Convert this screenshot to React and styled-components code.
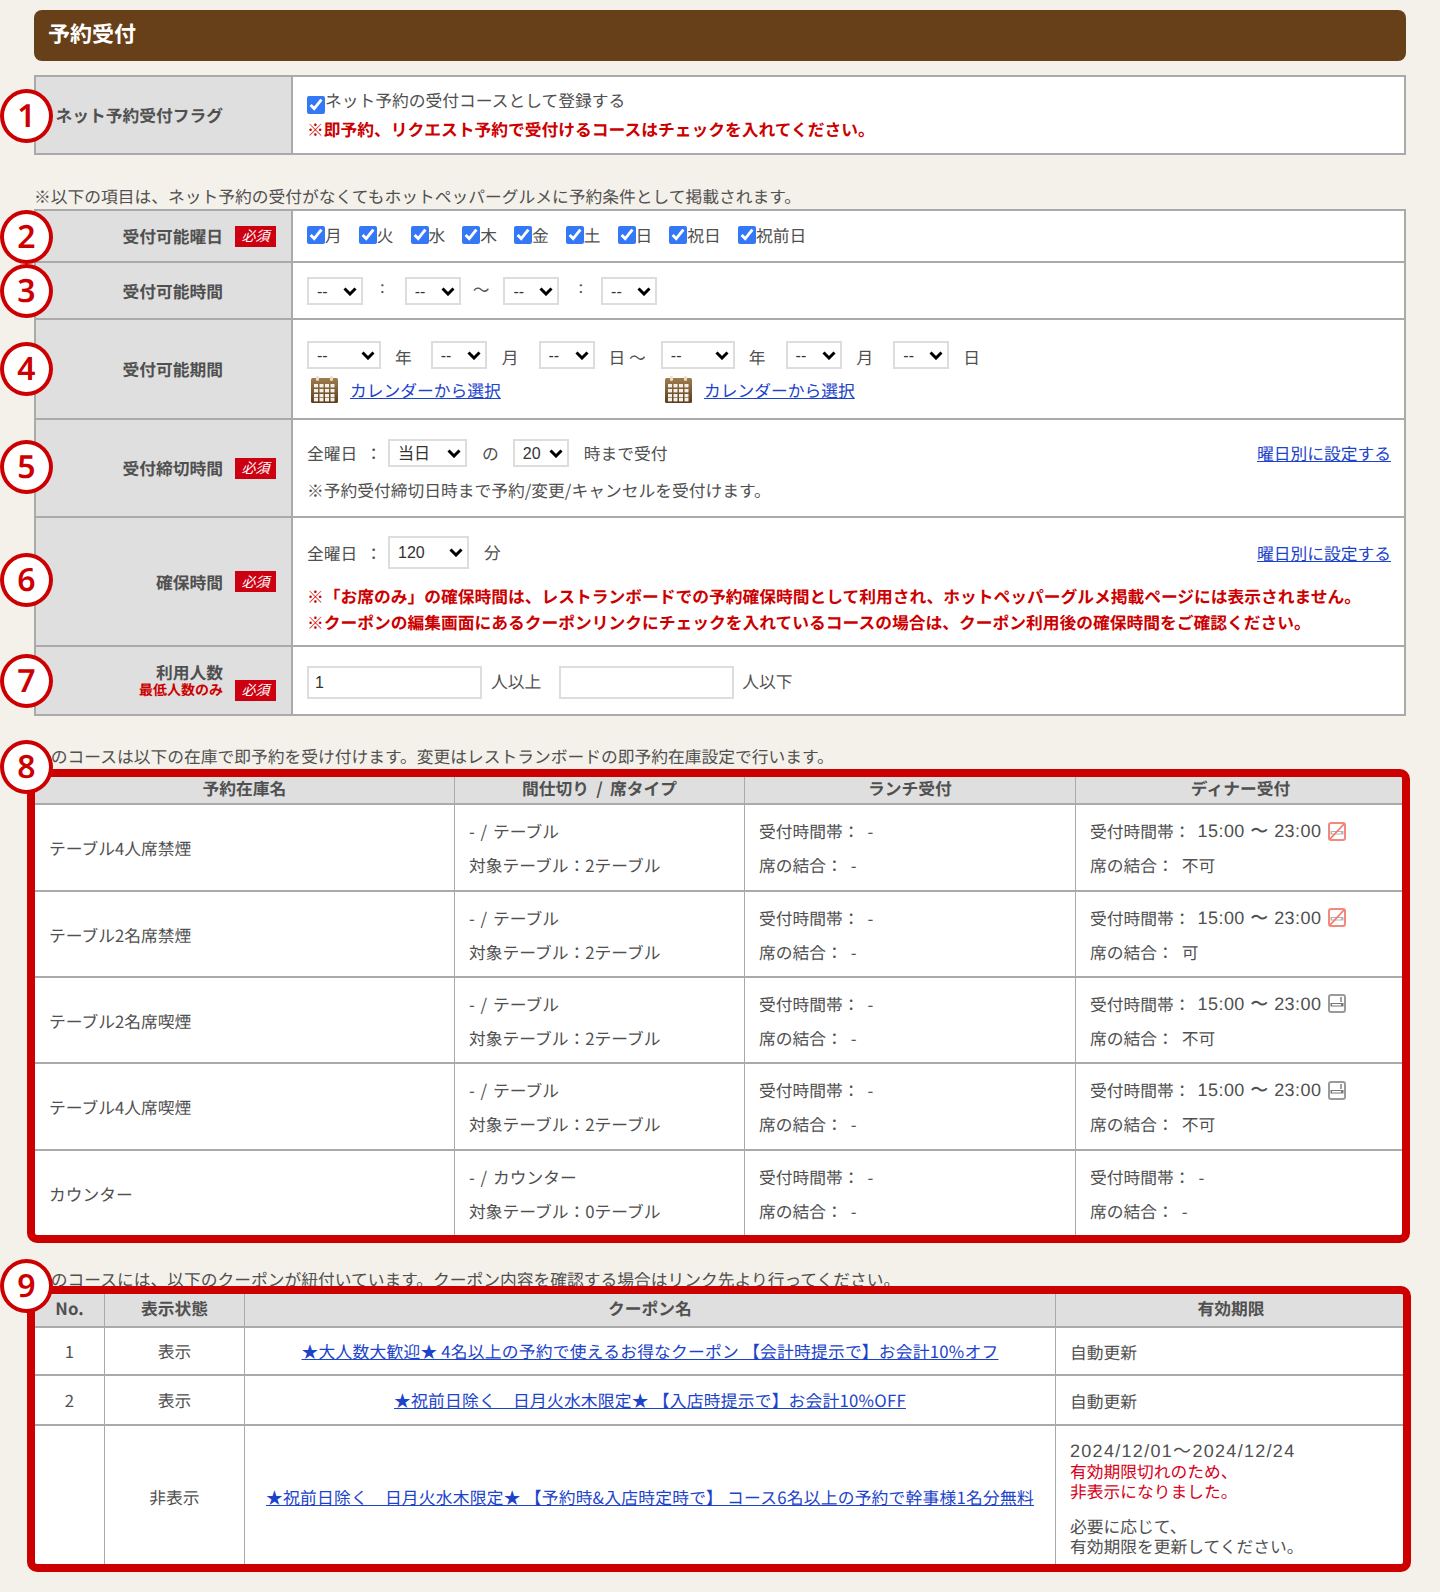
import styled, { createGlobalStyle } from "styled-components";

const Global = createGlobalStyle`
	body {
		margin: 0;
		background: #f4f1ea;
		color: #505050;
		font-family: "Noto Sans CJK JP", "Noto Sans", sans-serif;
		font-size: 16.75px;
		line-height: 20px;
		text-rendering: geometricPrecision;
	}
`;

const Page = styled.div`
	position: relative;
	width: 1372px;
	height: 1592px;
	padding: 10px 34px 0;
	overflow: hidden;
`;
const Heading = styled.h2`
	margin: 0 0 14px;
	height: 51px;
	box-sizing: border-box;
	display: flex;
	align-items: center;
	padding: 0 0 5px 14px;
	border-radius: 8px;
	background: #673f18;
	color: #fff;
	font-size: 22px;
	font-weight: 700;
`;
const Marker = styled.div`
	position: absolute;
	left: 0;
	top: ${(p) => p.$y - 27}px;
	z-index: 2;
	box-sizing: border-box;
	width: 53px;
	height: 54px;
	display: flex;
	align-items: center;
	justify-content: center;
	border: 4px solid #cc0000;
	border-radius: 50%;
	background: #fff;
	color: #cc0000;
	font-family: "Noto Sans", sans-serif;
	font-size: 32px;
	font-weight: 600;
`;
const Note = styled.p`
	margin: ${(p) => p.$mt}px 0 ${(p) => p.$mb}px;
	height: 20px;
`;

const FormTable = styled.table`
	width: 100%;
	table-layout: fixed;
	border-collapse: collapse;
	background: #fff;
	border: 2px solid #aaa;
`;
const Row = styled.tr`
	height: ${(p) => p.$h}px;
`;
const Label = styled.th`
	width: 257px;
	box-sizing: border-box;
	padding: 0 15px 0 0;
	background: #dfdfdf;
	border: 2px solid #aaa;
	font-weight: 700;
`;
const LabelWrap = styled.div`
	display: flex;
	align-items: ${(p) => (p.$end ? "flex-end" : "center")};
	justify-content: flex-end;
`;
const LabelText = styled.div`
	text-align: right;
	line-height: 18px;
`;
const SubLabel = styled.div`
	color: #cc0000;
	font-size: 14px;
`;
const BadgeSlot = styled.div`
	width: 41px;
	margin-left: 12px;
	flex: none;
`;
const Badge = styled.span`
	display: flex;
	align-items: center;
	justify-content: center;
	height: 21px;
	margin-bottom: ${(p) => (p.$low ? -2 : 0)}px;
	background: #cc0011;
	color: #fff;
	font-size: 14px;
	font-style: italic;
	font-weight: 400;
`;
const Field = styled.td`
	vertical-align: top;
	padding: ${(p) => p.$pt}px 13px 0 14px;
	border: 2px solid #aaa;
`;
const Line = styled.div`
	display: flex;
	align-items: center;
	height: ${(p) => p.$h || 28}px;
	margin-top: ${(p) => p.$mt || 0}px;
`;
const Red = styled.span`
	color: #cc0000;
	font-weight: 700;
`;
const Check = styled.input.attrs({ type: "checkbox" })`
	width: 18px;
	height: 18px;
	margin: ${(p) => p.$off || 0}px 0 0;
	flex: none;
	accent-color: #3478f6;
`;
const Day = styled.label`
	display: flex;
	align-items: center;
	margin-right: 17px;
`;
const chevron = encodeURIComponent(
	'<svg xmlns="http://www.w3.org/2000/svg" width="14" height="9" viewBox="0 0 14 9"><path d="M1.5 1.5 7 7l5.5-5.5" fill="none" stroke="#000" stroke-width="3"/></svg>'
);
const Select = styled.select`
	appearance: none;
	width: ${(p) => p.$w}px;
	height: ${(p) => p.$h || 28}px;
	padding: 0 0 0 8px;
	flex: none;
	box-sizing: border-box;
	border: 2px solid #ddd;
	border-radius: 0;
	background: #fff url("data:image/svg+xml,${chevron}") no-repeat right 4px center;
	color: #333;
	font-family: "Liberation Sans", "Noto Sans CJK JP", sans-serif;
	font-size: 16px;
`;
const Unit = styled.span`
	margin: 0 ${(p) => p.$r}px ${(p) => p.$up || 0}px ${(p) => p.$l}px;
	flex: none;
`;
const Link = styled.a`
	color: #1c43c9;
	text-decoration: underline;
`;
const CouponLink = styled(Link)`
	letter-spacing: 0.23px;
`;
const PushLink = styled(Link)`
	margin-left: auto;
`;
const CalLink = styled.div`
	display: flex;
	align-items: center;
	width: 350px;
	padding-left: 4px;
	gap: 12px;
`;
const TextBox = styled.input`
	width: 175px;
	height: 33px;
	padding: 0 6px;
	box-sizing: border-box;
	border: 2px solid #ddd;
	color: #333;
	font-family: "Liberation Sans", sans-serif;
	font-size: 16px;
`;

const Frame = styled.div`
	position: relative;
	width: ${(p) => p.$w}px;
	margin-left: -7px;
	box-sizing: border-box;
	border: 8px solid #cc0000;
	border-radius: 10px;
	overflow: hidden;
	background: #fff;
`;
const DataTable = styled.table`
	width: 100%;
	table-layout: fixed;
	border-collapse: collapse;
	tr > *:first-child {
		border-left: none;
	}
	tr > *:last-child {
		border-right: none;
	}
	thead th {
		border-top: none;
	}
	tbody tr:last-child td {
		border-bottom: none;
	}
`;
const HeadCell = styled.th`
	width: ${(p) => p.$w}px;
	padding: 0 0 4px;
	background: #dfdfdf;
	border: 1px solid #aaa;
	border-bottom-width: 2px;
	font-weight: 700;
	word-spacing: 3.5px;
`;
const Cell = styled.td`
	padding: ${(p) => (p.$center ? `${p.$pt || 0}px 0 0` : `${p.$pt || 1}px 14px 0`)};
	border: 1px solid #aaa;
	border-bottom-width: 2px;
	text-align: ${(p) => (p.$center ? "center" : "left")};
`;
const CellLine = styled.div`
	display: flex;
	align-items: center;
	height: 34px;
`;
const TypeLine = styled(CellLine)`
	word-spacing: 2px;
`;
const Gap = styled.span`
	margin-left: 8px;
`;
const Num = styled.span`
	margin-left: 7px;
	font-family: "Liberation Sans", sans-serif;
	font-size: 18px;
	letter-spacing: 0.45px;
`;
const ExpireNum = styled.div`
	font-family: "Liberation Sans", "Noto Sans CJK JP", sans-serif;
	font-size: 18px;
	letter-spacing: 1.3px;
`;
const Expired = styled.div`
	color: #d9001b;
`;
const Spacer = styled.div`
	height: 15px;
`;

function CalendarIcon() {
	return (
		<svg width="27" height="27" viewBox="0 0 27 27">
			<defs>
				<linearGradient id="cal" x1="0" y1="0" x2="0" y2="1">
					<stop offset="0" stopColor="#a07d4e" />
					<stop offset="1" stopColor="#5b3d1e" />
				</linearGradient>
			</defs>
			<rect x="0" y="2" width="27" height="25" rx="1.5" fill="url(#cal)" />
			<rect x="5" y="0" width="3" height="5" rx="1.5" fill="#e8dcc8" />
			<rect x="19" y="0" width="3" height="5" rx="1.5" fill="#e8dcc8" />
			{[8, 13, 18, 22].map((y) =>
				[3, 8.5, 14, 19.5].map((x) => (
					<rect key={`${x}-${y}`} x={x} y={y} width="4" height="3.4" fill="#f6f1e8" />
				))
			)}
		</svg>
	);
}

function SmokeIcon({ no }) {
	const edge = no ? "#f2897c" : "#9a9a9a";
	return (
		<svg width="18" height="19" viewBox="0 0 18 19" style={{ marginLeft: 7, flex: "none" }}>
			<rect x="1" y="1" width="16" height="17" rx="2" fill="#fff" stroke={edge} strokeWidth="2" />
			<rect x="2.5" y="9" width="13" height="3.5" fill={no ? "#b5b5b5" : "#777"} />
			<rect x="4" y="10" width="9" height="1.5" fill="#fff" />
			{no ? (
				<line x1="2" y1="17" x2="16" y2="2" stroke="#f2796a" strokeWidth="1.8" />
			) : (
				<line x1="13" y1="3" x2="13" y2="8" stroke="#777" strokeWidth="1.4" />
			)}
		</svg>
	);
}

function FormLabel({ children, required, sub }) {
	return (
		<LabelWrap $end={!!sub}>
			<LabelText>
				{children}
				{sub && <SubLabel>{sub}</SubLabel>}
			</LabelText>
			<BadgeSlot>{required && <Badge $low={!!sub}>必須</Badge>}</BadgeSlot>
		</LabelWrap>
	);
}

const Blank = ({ w, h }) => (
	<Select $w={w} $h={h}>
		<option>--</option>
	</Select>
);

const days = ["月", "火", "水", "木", "金", "土", "日", "祝日", "祝前日"];
const markers = [116, 237, 291, 369, 467, 580, 681, 767, 1286];

const stock = [
	{ name: "テーブル4人席禁煙", type: "- / テーブル", count: "2テーブル", time: true, join: "不可", no: true, h: 87 },
	{ name: "テーブル2名席禁煙", type: "- / テーブル", count: "2テーブル", time: true, join: "可", no: true, h: 86 },
	{ name: "テーブル2名席喫煙", type: "- / テーブル", count: "2テーブル", time: true, join: "不可", no: false, h: 86 },
	{ name: "テーブル4人席喫煙", type: "- / テーブル", count: "2テーブル", time: true, join: "不可", no: false, h: 87 },
	{ name: "カウンター", type: "- / カウンター", count: "0テーブル", time: false, join: "-", h: 85 },
];

export default function App() {
	return (
		<Page>
			<Global />
			{markers.map((y, i) => (
				<Marker key={y} $y={y}>{i + 1}</Marker>
			))}
			<Heading>予約受付</Heading>

			<FormTable>
				<tbody>
					<Row $h={78}>
						<Label><FormLabel>ネット予約受付フラグ</FormLabel></Label>
						<Field $pt={8}>
							<Line $h={29}>
								<Check defaultChecked $off={10} />ネット予約の受付コースとして登録する
							</Line>
							<Line $h={29}><Red>※即予約、リクエスト予約で受付けるコースはチェックを入れてください。</Red></Line>
						</Field>
					</Row>
				</tbody>
			</FormTable>

			<Note $mt={31} $mb={3}>※以下の項目は、ネット予約の受付がなくてもホットペッパーグルメに予約条件として掲載されます。</Note>

			<FormTable>
				<tbody>
					<Row $h={52}>
						<Label><FormLabel required>受付可能曜日</FormLabel></Label>
						<Field $pt={10}>
							<Line>
								{days.map((d) => (
									<Day key={d}><Check defaultChecked />{d}</Day>
								))}
							</Line>
						</Field>
					</Row>
					<Row $h={57}>
						<Label><FormLabel>受付可能時間</FormLabel></Label>
						<Field $pt={14}>
							<Line>
								<Blank w={56} />
								<Unit $l={17} $r={20} $up={10}>:</Unit>
								<Blank w={56} />
								<Unit $l={12} $r={14} $up={4}>〜</Unit>
								<Blank w={56} />
								<Unit $l={19} $r={18} $up={10}>:</Unit>
								<Blank w={56} />
							</Line>
						</Field>
					</Row>
					<Row $h={100}>
						<Label><FormLabel>受付可能期間</FormLabel></Label>
						<Field $pt={21}>
							<Line>
								<Blank w={74} />
								<Unit $l={14} $r={19} $up={-4}>年</Unit>
								<Blank w={56} />
								<Unit $l={15} $r={20} $up={-4}>月</Unit>
								<Blank w={56} />
								<Unit $l={14} $r={15} $up={-4}>日 〜</Unit>
								<Blank w={74} />
								<Unit $l={14} $r={20} $up={-4}>年</Unit>
								<Blank w={56} />
								<Unit $l={15} $r={20} $up={-4}>月</Unit>
								<Blank w={56} />
								<Unit $l={14} $r={0} $up={-4}>日</Unit>
							</Line>
							<Line $h={27} $mt={7}>
								<CalLink><CalendarIcon /><Link href="#">カレンダーから選択</Link></CalLink>
								<CalLink><CalendarIcon /><Link href="#">カレンダーから選択</Link></CalLink>
							</Line>
						</Field>
					</Row>
					<Row $h={98}>
						<Label><FormLabel required>受付締切時間</FormLabel></Label>
						<Field $pt={19}>
							<Line>
								全曜日
								<Unit $l={8} $r={6}>：</Unit>
								<Select $w={79} defaultValue="当日"><option>当日</option></Select>
								<Unit $l={15} $r={14}>の</Unit>
								<Select $w={56}><option>20</option></Select>
								<Unit $l={15} $r={0}>時まで受付</Unit>
								<PushLink href="#">曜日別に設定する</PushLink>
							</Line>
							<Line $mt={9}>※予約受付締切日時まで予約/変更/キャンセルを受付けます。</Line>
						</Field>
					</Row>
					<Row $h={129}>
						<Label><FormLabel required>確保時間</FormLabel></Label>
						<Field $pt={18}>
							<Line $h={33}>
								全曜日
								<Unit $l={8} $r={6}>：</Unit>
								<Select $w={81} $h={33}><option>120</option></Select>
								<Unit $l={15} $r={0} $up={2}>分</Unit>
								<PushLink href="#">曜日別に設定する</PushLink>
							</Line>
							<Line $h={26} $mt={14}><Red>※「お席のみ」の確保時間は、レストランボードでの予約確保時間として利用され、ホットペッパーグルメ掲載ページには表示されません。</Red></Line>
							<Line $h={26}><Red>※クーポンの編集画面にあるクーポンリンクにチェックを入れているコースの場合は、クーポン利用後の確保時間をご確認ください。</Red></Line>
						</Field>
					</Row>
					<Row $h={69}>
						<Label><FormLabel required sub="最低人数のみ">利用人数</FormLabel></Label>
						<Field $pt={19}>
							<Line $h={33}>
								<TextBox defaultValue="1" />
								<Unit $l={9} $r={18} $up={4}>人以上</Unit>
								<TextBox />
								<Unit $l={8} $r={0} $up={4}>人以下</Unit>
							</Line>
						</Field>
					</Row>
				</tbody>
			</FormTable>

			<Note $mt={30} $mb={3}>このコースは以下の在庫で即予約を受け付けます。変更はレストランボードの即予約在庫設定で行います。</Note>
			<Frame $w={1383}>
				<DataTable>
					<thead>
						<Row $h={27}>
							<HeadCell $w={419}>予約在庫名</HeadCell>
							<HeadCell $w={289}>間仕切り / 席タイプ</HeadCell>
							<HeadCell $w={330}>ランチ受付</HeadCell>
							<HeadCell $w={329}>ディナー受付</HeadCell>
						</Row>
					</thead>
					<tbody>
						{stock.map((s) => (
							<Row key={s.name} $h={s.h}>
								<Cell>{s.name}</Cell>
								<Cell>
									<TypeLine>{s.type}</TypeLine>
									<CellLine>対象テーブル：{s.count}</CellLine>
								</Cell>
								<Cell>
									<CellLine>受付時間帯：<Gap>-</Gap></CellLine>
									<CellLine>席の結合：<Gap>-</Gap></CellLine>
								</Cell>
								<Cell>
									<CellLine>
										受付時間帯：
										{s.time ? (
											<>
												<Num>15:00 〜 23:00</Num>
												<SmokeIcon no={s.no} />
											</>
										) : (
											<Gap>-</Gap>
										)}
									</CellLine>
									<CellLine>席の結合：<Gap>{s.join}</Gap></CellLine>
								</Cell>
							</Row>
						))}
					</tbody>
				</DataTable>
			</Frame>

			<Note $mt={26} $mb={-3}>このコースには、以下のクーポンが紐付いています。クーポン内容を確認する場合はリンク先より行ってください。</Note>
			<Frame $w={1384}>
				<DataTable>
					<thead>
						<Row $h={33}>
							<HeadCell $w={69}>No.</HeadCell>
							<HeadCell $w={139}>表示状態</HeadCell>
							<HeadCell $w={810}>クーポン名</HeadCell>
							<HeadCell $w={350}>有効期限</HeadCell>
						</Row>
					</thead>
					<tbody>
						<Row $h={48}>
							<Cell $center>1</Cell>
							<Cell $center>表示</Cell>
							<Cell $center><CouponLink href="#">★大人数大歓迎★ 4名以上の予約で使えるお得なクーポン 【会計時提示で】お会計10%オフ</CouponLink></Cell>
							<Cell>自動更新</Cell>
						</Row>
						<Row $h={50}>
							<Cell $center>2</Cell>
							<Cell $center>表示</Cell>
							<Cell $center><CouponLink href="#">★祝前日除く　日月火水木限定★ 【入店時提示で】お会計10%OFF</CouponLink></Cell>
							<Cell>自動更新</Cell>
						</Row>
						<Row $h={139}>
							<Cell $center></Cell>
							<Cell $center $pt={4}>非表示</Cell>
							<Cell $center $pt={4}><CouponLink href="#">★祝前日除く　日月火水木限定★ 【予約時&amp;入店時定時で】 コース6名以上の予約で幹事様1名分無料</CouponLink></Cell>
							<Cell $pt={6}>
								<ExpireNum>2024/12/01〜2024/12/24</ExpireNum>
								<Expired>有効期限切れのため、<br />非表示になりました。</Expired>
								<Spacer />
								必要に応じて、<br />有効期限を更新してください。
							</Cell>
						</Row>
					</tbody>
				</DataTable>
			</Frame>
		</Page>
	);
}
